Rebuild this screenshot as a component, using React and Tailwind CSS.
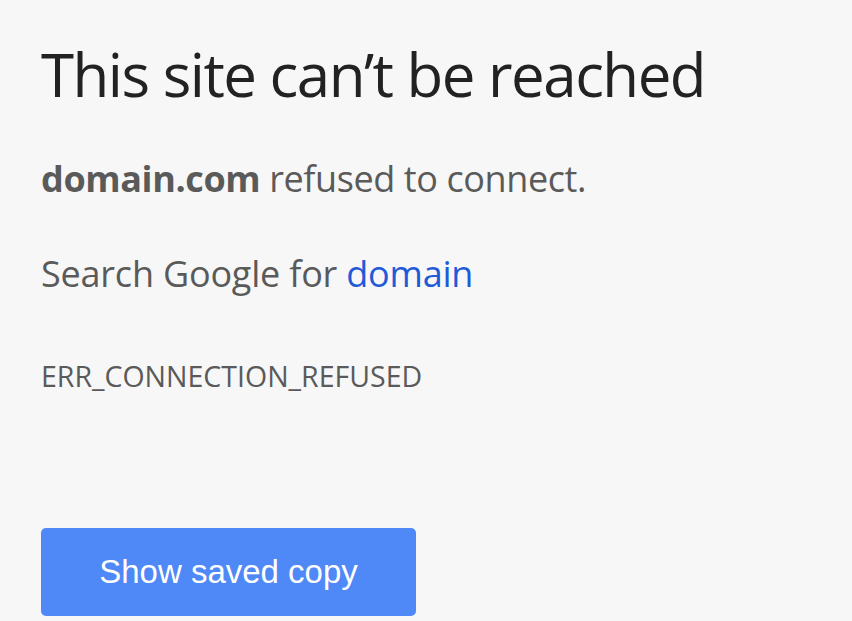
export default function App() {
  return (
    <div className="w-[852px] h-[621px] overflow-hidden bg-[#f7f7f7] pl-[41px] pt-[38px]">
      <h1 className="text-[60px] leading-[72px] text-[#222222] font-['Open_Sans',sans-serif] tracking-[-1.5px]">
        This site can’t be reached
      </h1>
      <p className="mt-[47px] text-[36px] leading-[44px] text-[#5a5a5a] font-['Open_Sans',sans-serif] tracking-[-0.4px]">
        <span className="font-bold">domain.com</span> refused to connect.
      </p>
      <p className="mt-[51px] text-[36px] leading-[44px] text-[#5a5a5a] font-['Open_Sans',sans-serif] tracking-[-0.2px]">
        Search Google for <span className="text-[#1f5ad8]">domain</span>
      </p>
      <p className="mt-[62px] text-[28.5px] leading-[36px] text-[#5a5a5a] font-['Open_Sans',sans-serif]">
        ERR_CONNECTION_REFUSED
      </p>
      <button className="mt-[134px] w-[375px] h-[88px] rounded-[5px] bg-[#4f88f7] text-white text-[33px] font-['Liberation_Sans',Arial,sans-serif] flex items-center justify-center">
        Show saved copy
      </button>
    </div>
  );
}
